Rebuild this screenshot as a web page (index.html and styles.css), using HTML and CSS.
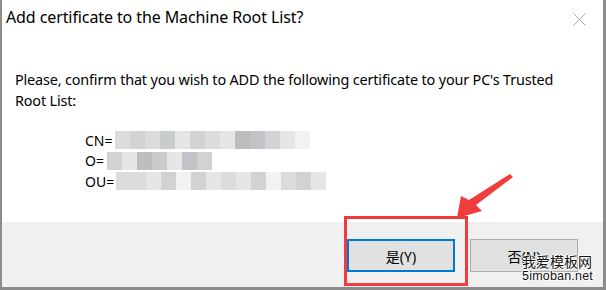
FILE: index.html
```html
<!DOCTYPE html>
<html lang="en">
<head>
    <meta charset="UTF-8">
    <title>Add certificate to the Machine Root List?</title>
    <link rel="stylesheet" href="styles.css">
</head>
<body>

<div class="window">
    <div class="title-bar">
        <span class="title">Add certificate to the Machine Root List?</span>
        <svg class="close" width="13" height="13" viewBox="0 0 13 13">
            <path d="M0.5 0.5 L12.5 12.5 M12.5 0.5 L0.5 12.5" stroke="#a8a8a8" stroke-width="1" fill="none"/>
        </svg>
    </div>

    <div class="content">
        <p class="message">Please, confirm that you wish to ADD the following certificate to your PC's Trusted Root List:</p>

        <div class="cert">
            <div class="cert-row">
                <span>CN=</span>
                <span class="mosaic">
                    <i class="p2"></i><i class="p3"></i><i class="p2"></i><i class="p4"></i><i class="p1"></i><i class="p3"></i><i class="p2"></i><i class="p1"></i><i class="p5"></i><i class="p6"></i><i class="p3"></i><i class="p1"></i><i class="p0"></i>
                </span>
            </div>
            <div class="cert-row">
                <span>O=</span>
                <span class="mosaic mosaic-o">
                    <i class="p3"></i><i class="p1"></i><i class="p5"></i><i class="p4"></i><i class="p1"></i><i class="p6"></i><i class="p3"></i>
                </span>
            </div>
            <div class="cert-row">
                <span>OU=</span>
                <span class="mosaic">
                    <i class="p2"></i><i class="p2"></i><i class="p1"></i><i class="p3"></i><i class="p0"></i><i class="p3"></i><i class="p1"></i><i class="p2"></i><i class="p1"></i><i class="p3"></i><i class="p0"></i><i class="p2"></i><i class="p3"></i><i class="p1"></i>
                </span>
            </div>
        </div>
    </div>

    <div class="footer">
        <button class="btn btn-default">是(Y)</button>
        <button class="btn">否(N)</button>
    </div>

    <!-- annotation on top of the screenshot -->
    <div class="highlight"></div>
    <svg class="arrow" width="70" height="60" viewBox="450 170 70 60">
        <polygon points="510,174 513,177 476,205 482,211 457,218 461,196 469,200" fill="#f03c3c"/>
    </svg>
    <div class="watermark">
        <span class="wm-cn">我爱模板网</span>
        <span class="wm-en">5imoban.net</span>
    </div>
</div>

</body>
</html>
```

FILE: styles.css
```css
/* Dialog */
body {
    margin: 0; background: #8c8c8c;
    font-family: "Segoe UI", "Noto Sans", "Noto Sans CJK SC", sans-serif;
    width: 606px; height: 290px; overflow: hidden;
}
.window {
    position: relative;
    margin-left: 2px; width: 601px; height: 287px;
    background: #fff; display: flex; flex-direction: column;
    color: #000;
}
.title-bar {
    display: flex; justify-content: space-between; align-items: flex-start;
    padding: 6px 17px 0 4px; height: 44px; box-sizing: border-box;
}
.title { font-size: 16px; line-height: 22px; letter-spacing: -0.1px; }
.close { margin-top: 7px; }

.content { flex: 1; padding: 25px 0 0 13px; }
.message {
    margin: 0; font-size: 14.4px; line-height: 21px; width: 560px;
    letter-spacing: -0.15px;
}
.cert { margin-top: 19px; padding-left: 70px; font-size: 14px; }
.cert-row { display: flex; align-items: center; height: 20.5px; }
.mosaic { display: flex; height: 18px; margin-left: 2px; }
.mosaic-o { margin-left: 3px; }
.mosaic i { display: block; width: 15px; height: 100%; }
.p0 { background: #f2f2f2; }
.p1 { background: #e6e6e6; }
.p2 { background: #dcdcdc; }
.p3 { background: #d2d2d2; }
.p4 { background: #c9cccc; }
.p5 { background: #bdbdbd; }
.p6 { background: #c4c2c8; }

.footer {
    height: 65px; box-sizing: border-box; background: #f0f0f0;
    display: flex; justify-content: flex-end; align-items: flex-start;
    gap: 15px; padding: 17px 25px 0 0;
}
.btn {
    width: 108px; height: 33px; background: #e1e1e1;
    border: 1px solid #adadad; font-family: inherit; font-size: 14px;
    color: #000; padding: 0;
}
.btn-default { border: 2px solid #0078d7; }

/* Annotation overlays */
.highlight {
    position: absolute; left: 342px; top: 216px;
    width: 118px; height: 64px; border: 3px solid #f23c3c;
}
.arrow { position: absolute; left: 448px; top: 170px; }
.watermark {
    position: absolute; left: 520px; top: 254px;
    display: flex; flex-direction: column; align-items: flex-start;
    line-height: 15px; color: #111;
    text-shadow: 1px 0 #fff, -1px 0 #fff, 0 1px #fff, 0 -1px #fff;
}
.wm-cn { font-family: "Noto Sans CJK SC", sans-serif; font-size: 14px; }
.wm-en { font-family: "Liberation Sans", sans-serif; font-size: 12.5px; letter-spacing: 0.2px; }
```
